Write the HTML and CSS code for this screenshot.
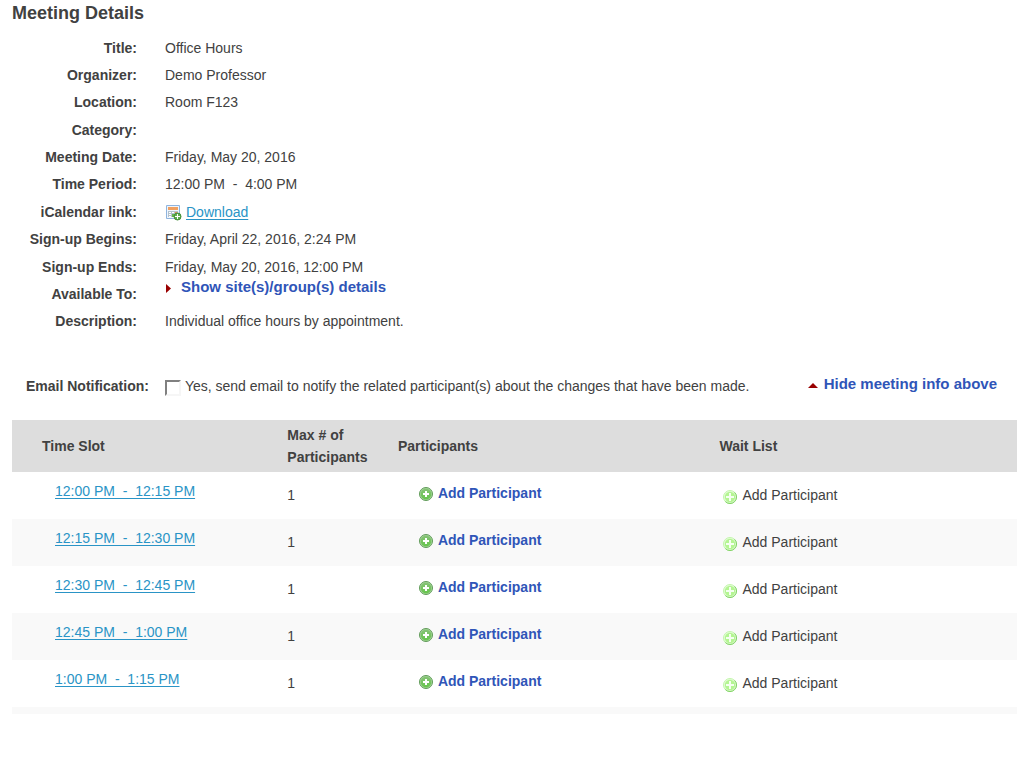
FILE: index.html
```html
<!DOCTYPE html>
<html lang="en">
<head>
<meta charset="utf-8">
<title>Meeting Details</title>
<link rel="stylesheet" href="styles.css">
</head>
<body>
<svg class="sprite" aria-hidden="true">
  <defs>
    <linearGradient id="green" x1="0" y1="0" x2="0" y2="1">
      <stop offset="0" stop-color="#86c277"/><stop offset="1" stop-color="#66c54c"/>
    </linearGradient>
    <symbol id="add" viewBox="0 0 14 14">
      <circle cx="7" cy="7" r="6.5" fill="#a9d89c" stroke="#5f9a59"/>
      <circle cx="7" cy="7" r="5.4" fill="url(#green)"/>
      <path d="M6 4h2v2h2v2H8v2H6V8H4V6h2z" fill="#fff"/>
    </symbol>
    <symbol id="add-pale" viewBox="0 0 14 14">
      <circle cx="7" cy="7" r="6.5" fill="#e4fcd9" stroke="#c3f5ac"/>
      <path d="M11.6 2.4A6.5 6.5 0 0 1 2.4 11.6" fill="none" stroke="#7fd064"/>
      <circle cx="7" cy="7" r="5.2" fill="#b4f592"/>
      <path d="M6 3h2v3h3v2H8v3H6V8H3V6h3z" fill="#f4fff0"/>
    </symbol>
  </defs>
</svg>
<main class="page">
  <h1 class="title">Meeting Details</h1>
  <dl class="details">
    <dt>Title:</dt><dd>Office Hours</dd>
    <dt>Organizer:</dt><dd>Demo Professor</dd>
    <dt>Location:</dt><dd>Room F123</dd>
    <dt>Category:</dt><dd></dd>
    <dt>Meeting Date:</dt><dd>Friday, May 20, 2016</dd>
    <dt>Time Period:</dt><dd>12:00 PM &nbsp;- &nbsp;4:00 PM</dd>
    <dt>iCalendar link:</dt>
    <dd class="download">
      <svg class="calendar" viewBox="0 0 16 16" aria-hidden="true">
        <path d="M.5.5h13v13H.5z" fill="#eef5fd" stroke="#8fb4de"/>
        <path d="M2 2h10v3H2z" fill="#f0a060"/>
        <path d="M2 6h10v6H2z" fill="#b4c2cd"/>
        <path d="M3 7h2v1H3zM6 7h2v1H6zM3 9h2v1H3zM3 11h2v1H3z" fill="#fff"/>
        <path d="M9 7h2v1H9z" fill="#e88a58"/>
        <path d="M6 9h2v3H6z" fill="#64b548"/>
        <circle cx="11.5" cy="11.5" r="3.5" fill="#5fae4c" stroke="#418c36"/>
        <path d="M11 9h1v2h2v1h-2v2h-1v-2H9v-1h2z" fill="#fff"/>
      </svg>
      <a class="link" href="#download">Download</a>
    </dd>
    <dt>Sign-up Begins:</dt><dd>Friday, April 22, 2016, 2:24 PM</dd>
    <dt>Sign-up Ends:</dt><dd>Friday, May 20, 2016, 12:00 PM</dd>
    <dt>Available To:</dt>
    <dd class="sites"><a class="action toggle" href="#sites"><svg class="arrow" viewBox="0 0 10 10" aria-hidden="true"><path d="M1 2l5 4.5L1 11z" fill="#900"/></svg>Show site(s)/group(s) details</a></dd>
    <dt>Description:</dt><dd>Individual office hours by appointment.</dd>
  </dl>
  <div class="notify">
    <span class="notify-label">Email Notification:</span>
    <input class="check" type="checkbox" id="email">
    <label for="email">Yes, send email to notify the related participant(s) about the changes that have been made.</label>
    <a class="action toggle hide" href="#hide"><svg class="arrow" viewBox="0 0 10 10" aria-hidden="true"><path d="M0 9l5-5 5 5z" fill="#900"/></svg>Hide meeting info above</a>
  </div>
  <table class="slots">
    <thead>
      <tr><th class="col-time" scope="col">Time Slot</th><th class="col-max" scope="col">Max # of<br>Participants</th><th class="col-people" scope="col">Participants</th><th class="col-wait" scope="col">Wait List</th></tr>
    </thead>
    <tbody>
      <tr><td class="time"><a class="link" href="#s1">12:00 PM &nbsp;- &nbsp;12:15 PM</a></td><td>1</td><td class="people"><a class="action" href="#p1"><svg class="plus" aria-hidden="true"><use href="#add"/></svg>Add Participant</a></td><td class="wait"><span class="waiting"><svg class="plus" aria-hidden="true"><use href="#add-pale"/></svg>Add Participant</span></td></tr>
      <tr><td class="time"><a class="link" href="#s2">12:15 PM &nbsp;- &nbsp;12:30 PM</a></td><td>1</td><td class="people"><a class="action" href="#p2"><svg class="plus" aria-hidden="true"><use href="#add"/></svg>Add Participant</a></td><td class="wait"><span class="waiting"><svg class="plus" aria-hidden="true"><use href="#add-pale"/></svg>Add Participant</span></td></tr>
      <tr><td class="time"><a class="link" href="#s3">12:30 PM &nbsp;- &nbsp;12:45 PM</a></td><td>1</td><td class="people"><a class="action" href="#p3"><svg class="plus" aria-hidden="true"><use href="#add"/></svg>Add Participant</a></td><td class="wait"><span class="waiting"><svg class="plus" aria-hidden="true"><use href="#add-pale"/></svg>Add Participant</span></td></tr>
      <tr><td class="time"><a class="link" href="#s4">12:45 PM &nbsp;- &nbsp;1:00 PM</a></td><td>1</td><td class="people"><a class="action" href="#p4"><svg class="plus" aria-hidden="true"><use href="#add"/></svg>Add Participant</a></td><td class="wait"><span class="waiting"><svg class="plus" aria-hidden="true"><use href="#add-pale"/></svg>Add Participant</span></td></tr>
      <tr><td class="time"><a class="link" href="#s5">1:00 PM &nbsp;- &nbsp;1:15 PM</a></td><td>1</td><td class="people"><a class="action" href="#p5"><svg class="plus" aria-hidden="true"><use href="#add"/></svg>Add Participant</a></td><td class="wait"><span class="waiting"><svg class="plus" aria-hidden="true"><use href="#add-pale"/></svg>Add Participant</span></td></tr>
    </tbody>
    <tfoot><tr><td class="end" colspan="4"></td></tr></tfoot>
  </table>
</main>
</body>
</html>
```
FILE: styles.css
```css
* { box-sizing: border-box; }
body {
  margin: 0;
  background: #fff;
  color: #414141;
  font: 14px/22px "Liberation Sans", Arial, sans-serif;
}
.sprite { position: absolute; width: 0; height: 0; }
.page { padding: 2px 13px 0 12px; }
.title { margin: 0 0 10px; font-size: 18px; line-height: 22px; }
.details {
  display: grid;
  grid-template-columns: 125px 1fr;
  grid-auto-rows: 1fr;
  align-items: center;
  column-gap: 28px;
  min-height: 301px;
  margin: 0;
}
dt { font-weight: bold; text-align: right; }
dd { margin: 0; }
.download { display: flex; align-items: center; gap: 4px; }
.calendar { width: 16px; height: 16px; margin: 2px 0 0 1px; }
.sites { align-self: start; line-height: 14px; }
.link { color: #2a94c6; text-underline-offset: 2px; }
.action {
  display: inline-flex;
  align-items: center;
  color: #2f55b8;
  font-weight: bold;
  text-decoration: none;
}
.toggle { font-size: 15px; }
.arrow { width: 10px; height: 10px; margin-right: 6px; overflow: visible; }
.notify { display: flex; align-items: center; height: 22px; margin: 40px 20px 23px 14px; }
.notify-label { font-weight: bold; }
.check {
  appearance: none;
  width: 16px;
  height: 16px;
  margin: 4px 4px 0 16px;
  border: 2px solid #808080;
  border-right-color: #f6f6f6;
  border-bottom-color: #f6f6f6;
  background: #fff;
}
.check:checked { background: #2f55b8; }
.hide { margin-left: auto; padding-bottom: 4px; }
.slots { width: 100%; border-collapse: collapse; table-layout: fixed; }
.slots th { height: 52px; padding: 4px; background: #ddd; text-align: left; }
.slots .col-time { width: 27%; padding-left: 30px; }
.col-max { width: 11%; }
.col-people { width: 32%; }
.slots td { height: 47px; padding: 12px 4px 0; vertical-align: top; }
.slots tbody tr:nth-child(even), .slots tfoot tr { background: #f9f9f9; }
.slots .time { padding: 8px 4px 0 43px; }
.slots .people { padding: 10px 4px 0 25px; }
.slots .wait { padding-left: 8px; }
.slots .end { height: 7px; padding: 0; }
.plus { width: 14px; height: 14px; margin-right: 5px; }
.people .plus { margin-top: 2px; }
.waiting { display: inline-flex; align-items: center; }
.waiting .plus { margin-top: 3px; }
```
